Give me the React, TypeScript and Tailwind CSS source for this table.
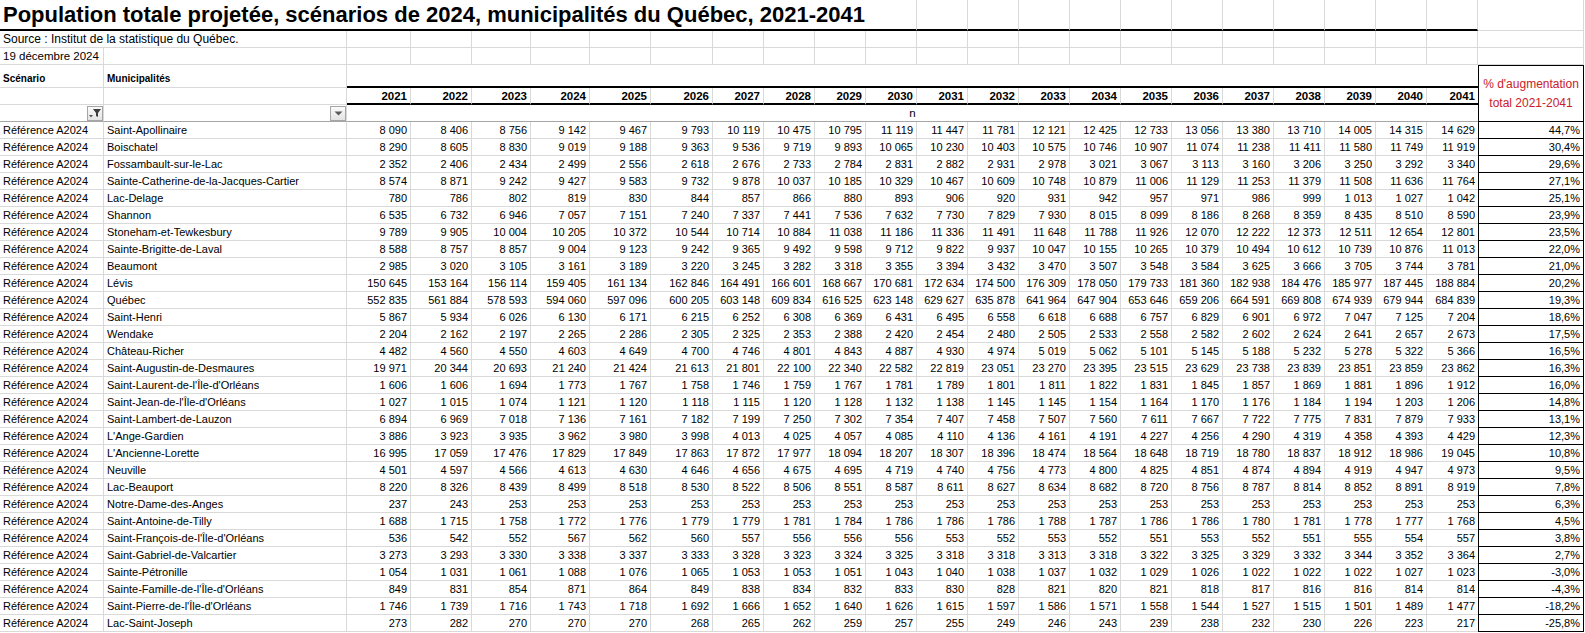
import React from 'react';

const YEARS = Array.from({ length: 21 }, (_, i) => 2021 + i);

type Row = { name: string; values: number[]; pct: string };

const ROWS: Row[] = [
    { name: 'Saint-Apollinaire', values: [8090, 8406, 8756, 9142, 9467, 9793, 10119, 10475, 10795, 11119, 11447, 11781, 12121, 12425, 12733, 13056, 13380, 13710, 14005, 14315, 14629], pct: '44,7%' },
    { name: 'Boischatel', values: [8290, 8605, 8830, 9019, 9188, 9363, 9536, 9719, 9893, 10065, 10230, 10403, 10575, 10746, 10907, 11074, 11238, 11411, 11580, 11749, 11919], pct: '30,4%' },
    { name: 'Fossambault-sur-le-Lac', values: [2352, 2406, 2434, 2499, 2556, 2618, 2676, 2733, 2784, 2831, 2882, 2931, 2978, 3021, 3067, 3113, 3160, 3206, 3250, 3292, 3340], pct: '29,6%' },
    { name: 'Sainte-Catherine-de-la-Jacques-Cartier', values: [8574, 8871, 9242, 9427, 9583, 9732, 9878, 10037, 10185, 10329, 10467, 10609, 10748, 10879, 11006, 11129, 11253, 11379, 11508, 11636, 11764], pct: '27,1%' },
    { name: 'Lac-Delage', values: [780, 786, 802, 819, 830, 844, 857, 866, 880, 893, 906, 920, 931, 942, 957, 971, 986, 999, 1013, 1027, 1042], pct: '25,1%' },
    { name: 'Shannon', values: [6535, 6732, 6946, 7057, 7151, 7240, 7337, 7441, 7536, 7632, 7730, 7829, 7930, 8015, 8099, 8186, 8268, 8359, 8435, 8510, 8590], pct: '23,9%' },
    { name: 'Stoneham-et-Tewkesbury', values: [9789, 9905, 10004, 10205, 10372, 10544, 10714, 10884, 11038, 11186, 11336, 11491, 11648, 11788, 11926, 12070, 12222, 12373, 12511, 12654, 12801], pct: '23,5%' },
    { name: 'Sainte-Brigitte-de-Laval', values: [8588, 8757, 8857, 9004, 9123, 9242, 9365, 9492, 9598, 9712, 9822, 9937, 10047, 10155, 10265, 10379, 10494, 10612, 10739, 10876, 11013], pct: '22,0%' },
    { name: 'Beaumont', values: [2985, 3020, 3105, 3161, 3189, 3220, 3245, 3282, 3318, 3355, 3394, 3432, 3470, 3507, 3548, 3584, 3625, 3666, 3705, 3744, 3781], pct: '21,0%' },
    { name: 'Lévis', values: [150645, 153164, 156114, 159405, 161134, 162846, 164491, 166601, 168667, 170681, 172634, 174500, 176309, 178050, 179733, 181360, 182938, 184476, 185977, 187445, 188884], pct: '20,2%' },
    { name: 'Québec', values: [552835, 561884, 578593, 594060, 597096, 600205, 603148, 609834, 616525, 623148, 629627, 635878, 641964, 647904, 653646, 659206, 664591, 669808, 674939, 679944, 684839], pct: '19,3%' },
    { name: 'Saint-Henri', values: [5867, 5934, 6026, 6130, 6171, 6215, 6252, 6308, 6369, 6431, 6495, 6558, 6618, 6688, 6757, 6829, 6901, 6972, 7047, 7125, 7204], pct: '18,6%' },
    { name: 'Wendake', values: [2204, 2162, 2197, 2265, 2286, 2305, 2325, 2353, 2388, 2420, 2454, 2480, 2505, 2533, 2558, 2582, 2602, 2624, 2641, 2657, 2673], pct: '17,5%' },
    { name: 'Château-Richer', values: [4482, 4560, 4550, 4603, 4649, 4700, 4746, 4801, 4843, 4887, 4930, 4974, 5019, 5062, 5101, 5145, 5188, 5232, 5278, 5322, 5366], pct: '16,5%' },
    { name: 'Saint-Augustin-de-Desmaures', values: [19971, 20344, 20693, 21240, 21424, 21613, 21801, 22100, 22340, 22582, 22819, 23051, 23270, 23395, 23515, 23629, 23738, 23839, 23851, 23859, 23862], pct: '16,3%' },
    { name: "Saint-Laurent-de-l'Île-d'Orléans", values: [1606, 1606, 1694, 1773, 1767, 1758, 1746, 1759, 1767, 1781, 1789, 1801, 1811, 1822, 1831, 1845, 1857, 1869, 1881, 1896, 1912], pct: '16,0%' },
    { name: "Saint-Jean-de-l'Île-d'Orléans", values: [1027, 1015, 1074, 1121, 1120, 1118, 1115, 1120, 1128, 1132, 1138, 1145, 1145, 1154, 1164, 1170, 1176, 1184, 1194, 1203, 1206], pct: '14,8%' },
    { name: 'Saint-Lambert-de-Lauzon', values: [6894, 6969, 7018, 7136, 7161, 7182, 7199, 7250, 7302, 7354, 7407, 7458, 7507, 7560, 7611, 7667, 7722, 7775, 7831, 7879, 7933], pct: '13,1%' },
    { name: "L'Ange-Gardien", values: [3886, 3923, 3935, 3962, 3980, 3998, 4013, 4025, 4057, 4085, 4110, 4136, 4161, 4191, 4227, 4256, 4290, 4319, 4358, 4393, 4429], pct: '12,3%' },
    { name: "L'Ancienne-Lorette", values: [16995, 17059, 17476, 17829, 17849, 17863, 17872, 17977, 18094, 18207, 18307, 18396, 18474, 18564, 18648, 18719, 18780, 18837, 18912, 18986, 19045], pct: '10,8%' },
    { name: 'Neuville', values: [4501, 4597, 4566, 4613, 4630, 4646, 4656, 4675, 4695, 4719, 4740, 4756, 4773, 4800, 4825, 4851, 4874, 4894, 4919, 4947, 4973], pct: '9,5%' },
    { name: 'Lac-Beauport', values: [8220, 8326, 8439, 8499, 8518, 8530, 8522, 8506, 8551, 8587, 8611, 8627, 8634, 8682, 8720, 8756, 8787, 8814, 8852, 8891, 8919], pct: '7,8%' },
    { name: 'Notre-Dame-des-Anges', values: [237, 243, 253, 253, 253, 253, 253, 253, 253, 253, 253, 253, 253, 253, 253, 253, 253, 253, 253, 253, 253], pct: '6,3%' },
    { name: 'Saint-Antoine-de-Tilly', values: [1688, 1715, 1758, 1772, 1776, 1779, 1779, 1781, 1784, 1786, 1786, 1786, 1788, 1787, 1786, 1786, 1780, 1781, 1778, 1777, 1768], pct: '4,5%' },
    { name: "Saint-François-de-l'Île-d'Orléans", values: [536, 542, 552, 567, 562, 560, 557, 556, 556, 556, 553, 552, 553, 552, 551, 553, 552, 551, 555, 554, 557], pct: '3,8%' },
    { name: 'Saint-Gabriel-de-Valcartier', values: [3273, 3293, 3330, 3338, 3337, 3333, 3328, 3323, 3324, 3325, 3318, 3318, 3313, 3318, 3322, 3325, 3329, 3332, 3344, 3352, 3364], pct: '2,7%' },
    { name: 'Sainte-Pétronille', values: [1054, 1031, 1061, 1088, 1076, 1065, 1053, 1053, 1051, 1043, 1040, 1038, 1037, 1032, 1029, 1026, 1022, 1022, 1022, 1027, 1023], pct: '-3,0%' },
    { name: "Sainte-Famille-de-l'Île-d'Orléans", values: [849, 831, 854, 871, 864, 849, 838, 834, 832, 833, 830, 828, 821, 820, 821, 818, 817, 816, 816, 814, 814], pct: '-4,3%' },
    { name: "Saint-Pierre-de-l'Île-d'Orléans", values: [1746, 1739, 1716, 1743, 1718, 1692, 1666, 1652, 1640, 1626, 1615, 1597, 1586, 1571, 1558, 1544, 1527, 1515, 1501, 1489, 1477], pct: '-18,2%' },
    { name: 'Lac-Saint-Joseph', values: [273, 282, 270, 270, 270, 268, 265, 262, 259, 257, 255, 249, 246, 243, 239, 238, 232, 230, 226, 223, 217], pct: '-25,8%' },
];

// Excel-style "8 090" grouping
function fmt(n: number) {
    return String(n).replace(/\B(?=(\d{3})+(?!\d))/g, ' ');
}

function Cell({ className = '', children }: { className?: string; children?: React.ReactNode }) {
    return (
        <div className={`box-border overflow-visible whitespace-nowrap border-b border-r border-[#d9d9d9] ${className}`}>
            {children}
        </div>
    );
}

function FilterButton({ active }: { active?: boolean }) {
    return (
        <div className="box-border flex h-[15px] w-[16px] items-center justify-center border border-[#a6a6a6] bg-gradient-to-b from-[#fbfbfb] to-[#e3e3e3]">
            {active ? (
                <svg width="14" height="12" viewBox="0 0 14 12">
                    <path d="M5 2h8l-3 4v4l-2-1V6z" fill="#3c3c3c" />
                    <path d="M1 8h4l-2 2.5z" fill="#555" />
                </svg>
            ) : (
                <svg width="9" height="5" viewBox="0 0 9 5">
                    <path d="M0.5 0.5h8l-4 4z" fill="#5a5a5a" />
                </svg>
            )}
        </div>
    );
}

export default function App() {
    const yearCols = YEARS.length;
    return (
        <div className="min-h-screen bg-white font-['Liberation_Sans',Arial,sans-serif] text-[11px] text-black">
            <div className="grid grid-cols-[104px_243px_64px_61px_59px_59px_61px_62px_repeat(15,51px)_106px] grid-rows-[31px_17px_17px_23px_17px_17px_repeat(30,17px)]">
                {/* title row */}
                <div className="col-span-11 box-border flex items-end border-b-2 border-black pb-[3px] pl-[3px] text-[22px] font-bold leading-none whitespace-nowrap">
                    Population totale projetée, scénarios de 2024, municipalités du Québec, 2021-2041
                </div>
                {YEARS.slice(9).map((y) => (
                    <Cell key={`t${y}`} className="!border-b-2 !border-b-black" />
                ))}
                <Cell />

                {/* source row */}
                <Cell className="col-span-2 pl-[3px] text-[12px] leading-[17px]">Source : Institut de la statistique du Québec.</Cell>
                {YEARS.map((y) => <Cell key={`s${y}`} />)}
                <Cell />

                {/* date row */}
                <Cell className="pl-[3px] text-[11.5px] leading-[17px]">19 décembre 2024</Cell>
                <Cell />
                {YEARS.map((y) => <Cell key={`d${y}`} />)}
                <Cell />

                {/* header row */}
                <Cell className="flex items-end pb-[3px] pl-[3px] text-[10px] font-bold leading-none">Scénario</Cell>
                <Cell className="flex items-end pb-[3px] pl-[3px] text-[10px] font-bold leading-none">Municipalités</Cell>
                <div className="box-border border-b-2 border-black" style={{ gridColumn: `span ${yearCols} / span ${yearCols}` }} />
                <div className="row-span-3 box-border flex flex-col items-center justify-center border border-black text-center text-[12px] leading-[19px] text-[#c8202a]">
                    <span>% d'augmentation</span>
                    <span>total 2021-2041</span>
                </div>

                {/* years row */}
                <Cell />
                <Cell />
                {YEARS.map((y, i) => (
                    <Cell
                        key={`y${y}`}
                        className={`!border-b-2 !border-b-black pr-[3px] text-right text-[11.5px] font-bold leading-[16px] ${i === yearCols - 1 ? '!border-r-0' : ''}`}
                    >
                        {y}
                    </Cell>
                ))}

                {/* filter row */}
                <Cell className="flex items-center justify-end !border-b-[#a6a6a6]">
                    <FilterButton active />
                </Cell>
                <Cell className="flex items-center justify-end !border-b-[#a6a6a6]">
                    <FilterButton />
                </Cell>
                <div
                    className="box-border border-b border-[#a6a6a6] text-center text-[11.5px] leading-[16px]"
                    style={{ gridColumn: `span ${yearCols} / span ${yearCols}` }}
                >
                    n
                </div>

                {/* data rows */}
                {ROWS.map((r) => (
                    <React.Fragment key={r.name}>
                        <Cell className="pl-[3px] leading-[17px]">Référence A2024</Cell>
                        <Cell className="pl-[3px] leading-[17px]">{r.name}</Cell>
                        {r.values.map((v, i) => (
                            <Cell
                                key={i}
                                className={`pr-[3px] text-right leading-[17px] ${i === yearCols - 1 ? '!border-r-0' : ''}`}
                            >
                                {fmt(v)}
                            </Cell>
                        ))}
                        <div className="box-border border-x border-b border-black pr-[3px] text-right leading-[17px]">
                            {r.pct}
                        </div>
                    </React.Fragment>
                ))}
            </div>
        </div>
    );
}
